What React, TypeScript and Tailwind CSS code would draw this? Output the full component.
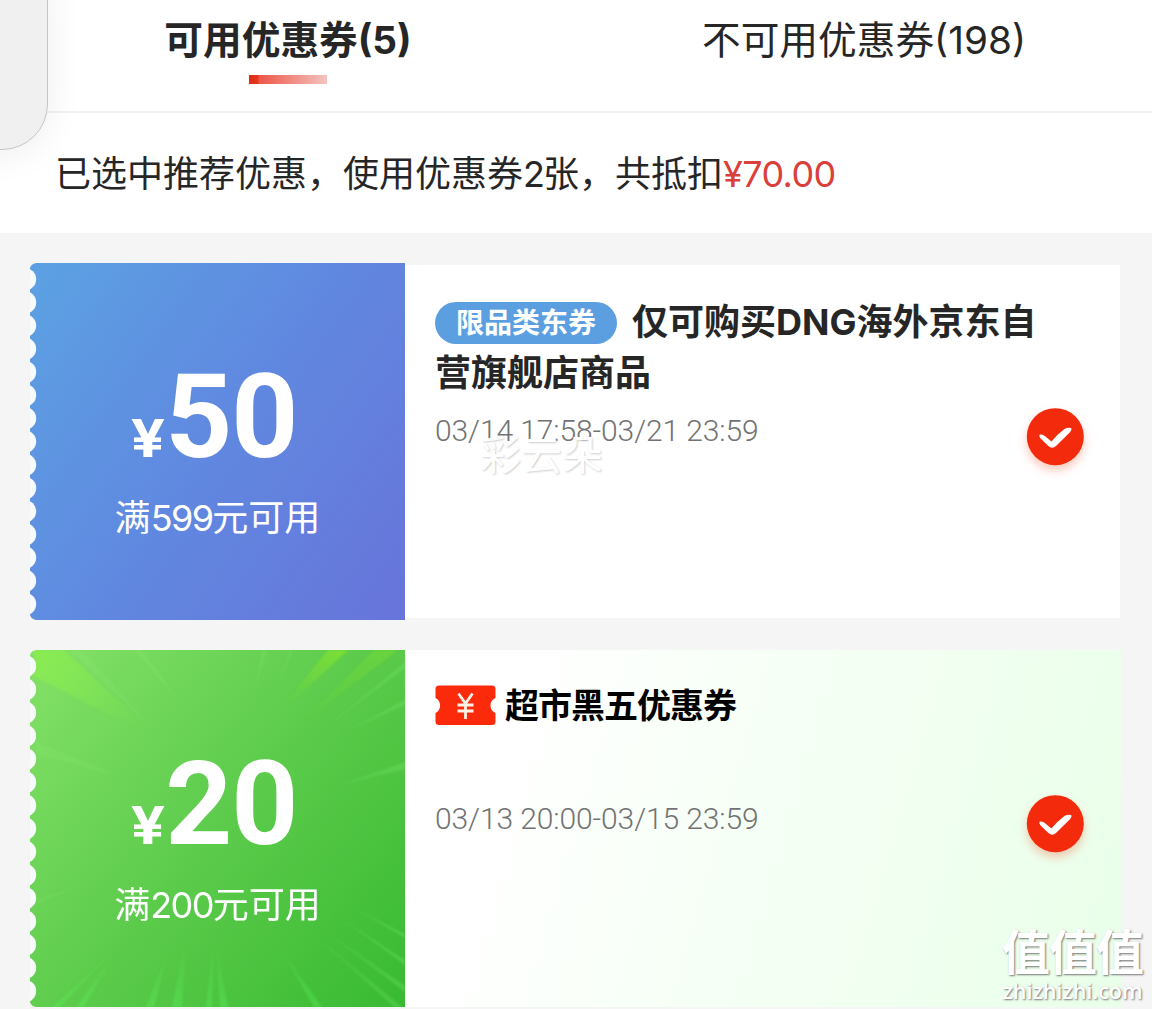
import type { ReactNode } from "react";

const notches = Array.from({ length: 15 }, (_, i) => 16.2 + i * 23.2);

function TicketEdge() {
  return (
    <svg className="absolute left-0 top-0" width="7" height="357" viewBox="0 0 7 357">
      <path d="M0 0H6Q1 1 0 5Z" fill="#f5f5f5" />
      <path d="M0 357H6Q1 356 0 352Z" fill="#f5f5f5" />
      {notches.map((y) => (
        <circle key={y} cx="-5" cy={y} r="11.2" fill="#f7fafb" />
      ))}
    </svg>
  );
}

function GreenRays() {
  return (
    <svg className="absolute inset-0" width="375" height="357" viewBox="0 0 375 357">
      <defs>
        <linearGradient id="ray-tl" gradientUnits="userSpaceOnUse" x1="10" y1="0" x2="110" y2="76">
          <stop offset="0" stopColor="#8df04a" stopOpacity="0.7" />
          <stop offset="1" stopColor="#8df04a" stopOpacity="0" />
        </linearGradient>
        <linearGradient id="ray-tr" x1="1" y1="0" x2="0" y2="1">
          <stop offset="0" stopColor="#86e62c" stopOpacity="0.75" />
          <stop offset="1" stopColor="#86e62c" stopOpacity="0" />
        </linearGradient>
        <linearGradient id="ray-bottom" gradientUnits="userSpaceOnUse" x1="0" y1="357" x2="0" y2="290">
          <stop offset="0" stopColor="#5df05a" stopOpacity="0.4" />
          <stop offset="1" stopColor="#5df05a" stopOpacity="0" />
        </linearGradient>
        <linearGradient id="ray-right" gradientUnits="userSpaceOnUse" x1="375" y1="0" x2="270" y2="0">
          <stop offset="0" stopColor="#7df072" stopOpacity="0.3" />
          <stop offset="1" stopColor="#7df072" stopOpacity="0" />
        </linearGradient>
        <filter id="soft" x="-10%" y="-10%" width="120%" height="120%">
          <feGaussianBlur stdDeviation="1.2" />
        </filter>
      </defs>
      <g filter="url(#soft)">
        <path d="M4 0H34L122 82L86 68L4 26Z" fill="url(#ray-tl)" />
        <path d="M298 0H318L262 52L256 52Z" fill="url(#ray-tr)" />
        <path d="M344 0H368L270 74Z" fill="url(#ray-tr)" opacity="0.5" />
        <path d="M375 12L280 90L375 18ZM375 50L310 84L375 55ZM375 112L306 136L375 119Z" fill="url(#ray-right)" />
        <path d="M6 92L95 128L6 104Z" fill="#a5f283" opacity="0.13" />
        <path d="M6 254L60 232L6 250ZM40 0L128 84L52 0Z" fill="#a5f283" opacity="0.12" />
        <path d="M104 0L150 52L112 0ZM232 0L224 44L237 0ZM260 0L246 40L263 0Z" fill="#a5f283" opacity="0.14" />
        <path
          d="M22 357L92 292L30 357ZM46 357L86 302L54 357ZM116 357L140 296L124 357ZM142 357L156 286L152 357ZM176 357L184 286L182 357ZM190 357L186 296L198 357ZM284 357L246 292L292 357Z"
          fill="url(#ray-bottom)"
        />
        <path
          d="M372 357L258 262L364 357ZM375 336L280 270L375 342ZM375 310L302 262L375 315ZM375 284L320 256L375 288Z"
          fill="url(#ray-right)"
        />
      </g>
    </svg>
  );
}

function CheckBadge() {
  return (
    <svg
      className="mt-[143px] size-[58px] shrink-0 overflow-visible drop-shadow-[0_5px_5px_rgba(250,70,30,0.3)]"
      viewBox="0 0 58 58"
    >
      <circle cx="29.3" cy="28.7" r="28.5" fill="#f42a0c" />
      <path
        d="M13.6 26.6Q16.8 25.8 19.4 28.4L25.4 33.4Q31.8 26 38.4 21Q41.8 19.3 45.2 20.1Q46.2 21.7 44.2 24L30 38Q26.2 41.6 22.4 38.1L14.6 30.6Q12.6 28.4 13.6 26.6Z"
        fill="#fff"
      />
    </svg>
  );
}

function TicketIcon() {
  return (
    <svg width="61" height="41" viewBox="0 0 61 41">
      <path
        d="M4 0.5H57Q60.5 0.5 60.5 4V13Q55.5 15 55.5 20.5Q55.5 26 60.5 28V36.5Q60.5 40 57 40H4Q0.5 40 0.5 36.5V28Q5 26 5 20.5Q5 15 0.5 13V4Q0.5 0.5 4 0.5Z"
        fill="#fb2a0b"
      />
      <path
        d="M23.5 8.5L30.5 18.5L37.5 8.5M30.5 18.5V34M22.5 20H38.5M22.5 26H38.5"
        fill="none"
        stroke="#fff1e6"
        strokeWidth="2.8"
      />
    </svg>
  );
}

type CouponProps = {
  amount: string;
  threshold: string;
  panel: string;
  body: string;
  date: string;
  dateClass: string;
  rays?: boolean;
  children: ReactNode;
};

function Coupon({ amount, threshold, panel, body, date, dateClass, rays, children }: CouponProps) {
  return (
    <div className="flex h-[357px]">
      <div className={`relative w-[375px] shrink-0 overflow-hidden ${panel}`}>
        {rays && <GreenRays />}
        <TicketEdge />
        <div className="relative flex flex-col items-center text-white">
          <div className="mt-[95px] flex h-[118px] items-baseline pr-[5px] font-bold leading-[118px]">
            <span className="origin-center scale-x-[1.16] text-[52px]">¥</span>
            <span className="ml-[3px] font-['Roboto'] text-[117px] tracking-[-1px]">{amount}</span>
          </div>
          <div className="mt-[16px] text-[36px] leading-[52px]">
            满<span className="tracking-[-1.6px]">{threshold}</span>元可用
          </div>
        </div>
      </div>
      <div className={`flex flex-1 justify-between pl-[30px] ${body}`}>
        <div className="flex w-[606px] flex-col">
          {children}
          <div className={`whitespace-pre font-['Roboto'] text-[30px] font-light leading-[36px] tracking-[-0.1px] text-[#727272] ${dateClass}`}>
            {date}
          </div>
        </div>
        <div className="-ml-[20px] shrink-0">
          <CheckBadge />
        </div>
      </div>
    </div>
  );
}

export default function App() {
  return (
    <div className="relative h-[1009px] w-[1152px] overflow-hidden bg-[#f5f5f5] font-['Inter','Noto_Sans_CJK_SC',sans-serif] text-[#262626]">
      <div className="flex h-[113px] border-b-2 border-[#f2f2f2] bg-white text-[38.7px] leading-[56px]">
        <div className="flex w-1/2 flex-col items-center pt-[12px]">
          <div className="font-bold">可用优惠券(5)</div>
          <div className="mt-[7px] h-[9px] w-[78px] bg-[linear-gradient(90deg,#dc2c12_0,#e5381f_9px,#ee5648_10px,#f3c4c0_100%)]" />
        </div>
        <div className="flex w-1/2 justify-center pt-[12px]">不可用优惠券(198)</div>
      </div>

      <div className="flex h-[120px] items-center bg-white pl-[55px] pt-[2px] text-[36px] leading-[52px]">
        <span>
          已选中推荐优惠，使用优惠券<span className="tracking-[-2px]">2</span>张，共抵扣
        </span>
        <span className="tracking-[-0.6px] text-[#d9403c]">¥70.00</span>
      </div>

      <div className="flex flex-col gap-[30px] pl-[30px] pr-[32px] pt-[30px]">
        <Coupon
          amount="50"
          threshold="599"
          panel="bg-[linear-gradient(125deg,#5c9fe2_5%,#6088e0_50%,#6874da_100%)]"
          body="my-[2px] bg-white pr-[36px]"
          date="03/14 17:58-03/21 23:59"
          dateClass="mt-[14px]"
        >
          <div className="mt-[32px] text-[36px] font-bold leading-[51px]">
            <span className="relative -top-[2px] mr-[15px] inline-flex h-[42px] w-[182px] items-center justify-center rounded-full bg-[#5c9fe1] align-middle text-[28px] leading-[42px] text-white">
              限品类东券
            </span>
            仅可购买DNG海外京东自
            <br />
            营旗舰店商品
          </div>
        </Coupon>
        <Coupon
          amount="20"
          threshold="200"
          panel="bg-[linear-gradient(130deg,#84e268_0%,#5ccb4b_50%,#38ba32_100%)]"
          body="-mr-px bg-[linear-gradient(106deg,#ffffff_15%,#f4fff4_55%,#e9ffe9_100%)] pr-[37px] pt-[2px]"
          date="03/13 20:00-03/15 23:59"
          dateClass="mt-[75px]"
          rays
        >
          <div className="mt-[33px] flex h-[41px] items-center gap-[9px] text-[34px] font-bold leading-[41px] tracking-[-1px] text-black">
            <TicketIcon />
            超市黑五优惠券
          </div>
        </Coupon>
      </div>

      <div className="absolute -left-[60px] -top-[20px] h-[170px] w-[108px] rounded-br-[46px] border border-[#c4c4c4] bg-[#eeeeee]/90 shadow-[0_4px_36px_rgba(0,0,0,0.07)]" />

      <div className="absolute left-[480px] top-[430px] text-[41px] leading-[50px] text-white [text-shadow:1px_1px_2px_#cfcfcf]">
        彩云朵
      </div>

      <div className="absolute left-[1001px] top-[926px] flex w-[143px] flex-col items-center text-white [text-shadow:1px_1px_2px_#777]">
        <div className="text-[48px] font-bold leading-[53px] tracking-[-1px]">值值值</div>
        <div className="font-['Open_Sans'] text-[21.5px] font-semibold leading-[24px]">zhizhizhi.com</div>
      </div>
    </div>
  );
}
